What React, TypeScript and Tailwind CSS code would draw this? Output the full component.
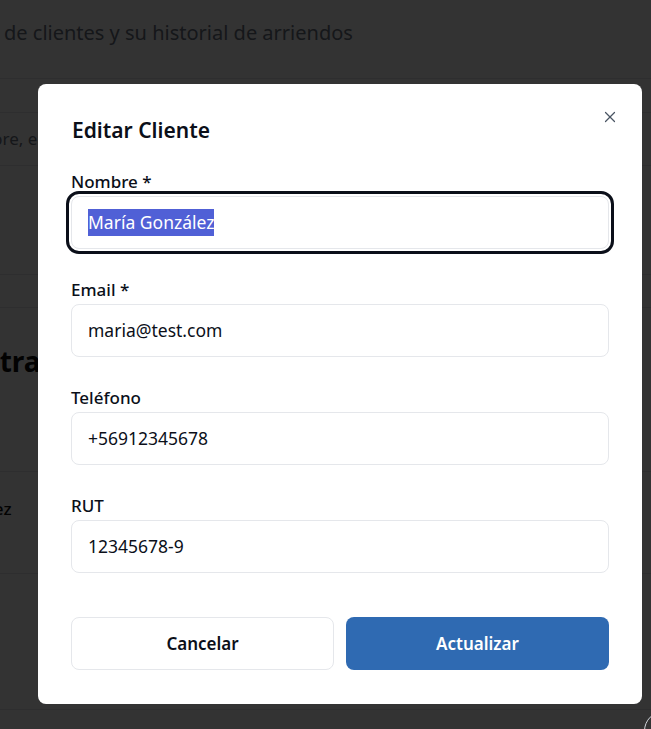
import { X } from "lucide-react";

const font = { fontFamily: '"Noto Sans", "Open Sans", sans-serif' };

function Field({ label, value, focused }: { label: string; value: string; focused?: boolean }) {
  return (
    <div className="flex flex-col">
      <label className="h-6 text-[17px] leading-6 font-medium text-[#0b0f19]">{label}</label>
      <div
        className={`mt-[2px] h-[53px] flex items-center rounded-lg border border-[#e5e7eb] bg-white px-4 text-[17.5px] text-[#0b0f19] ${
          focused ? "outline-[3px] outline-solid outline-[#0b0f19] outline-offset-[2px]" : ""
        }`}
      >
        {focused ? <span className="bg-[#5060d6] text-white">{value}</span> : <span>{value}</span>}
      </div>
    </div>
  );
}

export default function App() {
  return (
    <div className="relative h-[729px] w-[651px] overflow-hidden bg-white" style={font}>
      {/* page behind the dialog */}
      <div className="flex flex-col">
        <div className="h-[79px] border-b border-[#e5e7eb] pl-1 pt-[18px] text-[20px] text-[#6b7280]">
          de clientes y su historial de arriendos
        </div>
        <div className="h-[34px] border-b border-[#e5e7eb]" />
        <div className="h-[53px] border-b border-[#e5e7eb] flex items-center -ml-[8px] text-[17px] text-[#6b7280]">
          bre, email o RUT...
        </div>
        <div className="h-[109px] border-b border-[#e5e7eb]" />
        <div className="h-[33px] border-b border-[#e5e7eb]" />
        <div className="h-[164px] border-b border-[#e5e7eb] -ml-[54px] pt-[32px] text-[28px] font-bold text-[#0a0a0a]">
          Contratos
        </div>
        <div className="h-[102px] border-b border-[#e5e7eb] -ml-[62px] pt-[24px] text-[17px] font-medium text-[#0a0a0a]">
          González
        </div>
        <div className="h-[136px] border-b border-[#e5e7eb]" />
      </div>

      <div className="absolute inset-0 bg-black/80" />
      <div className="absolute left-[644px] top-[711px] h-10 w-10 rounded-full border border-[#d1d5db] bg-[#333]" />

      {/* dialog */}
      <div className="absolute left-[38px] top-[84px] w-[604px] rounded-lg bg-white px-[33px] pt-[32px] pb-[34px]">
        <button className="absolute right-[23px] top-[24px] text-[#4b5563]">
          <X className="h-[18px] w-[18px]" strokeWidth={1.6} />
        </button>
        <h2 className="ml-[1px] text-[21px] leading-7 font-semibold text-[#0b0f19]">Editar Cliente</h2>
        <div className="mt-[26px] flex flex-col gap-[29px]">
          <Field label="Nombre *" value="María González" focused />
          <Field label="Email *" value="maria@test.com" />
          <Field label="Teléfono" value="+56912345678" />
          <Field label="RUT" value="12345678-9" />
        </div>
        <div className="mt-[44px] grid grid-cols-2 gap-3">
          <button className="h-[53px] rounded-lg border border-[#e5e7eb] bg-white text-[17px] font-semibold text-[#0b0f19]">
            Cancelar
          </button>
          <button className="h-[53px] rounded-lg bg-[#2f6ab2] text-[17px] font-semibold text-white">
            Actualizar
          </button>
        </div>
      </div>
    </div>
  );
}
